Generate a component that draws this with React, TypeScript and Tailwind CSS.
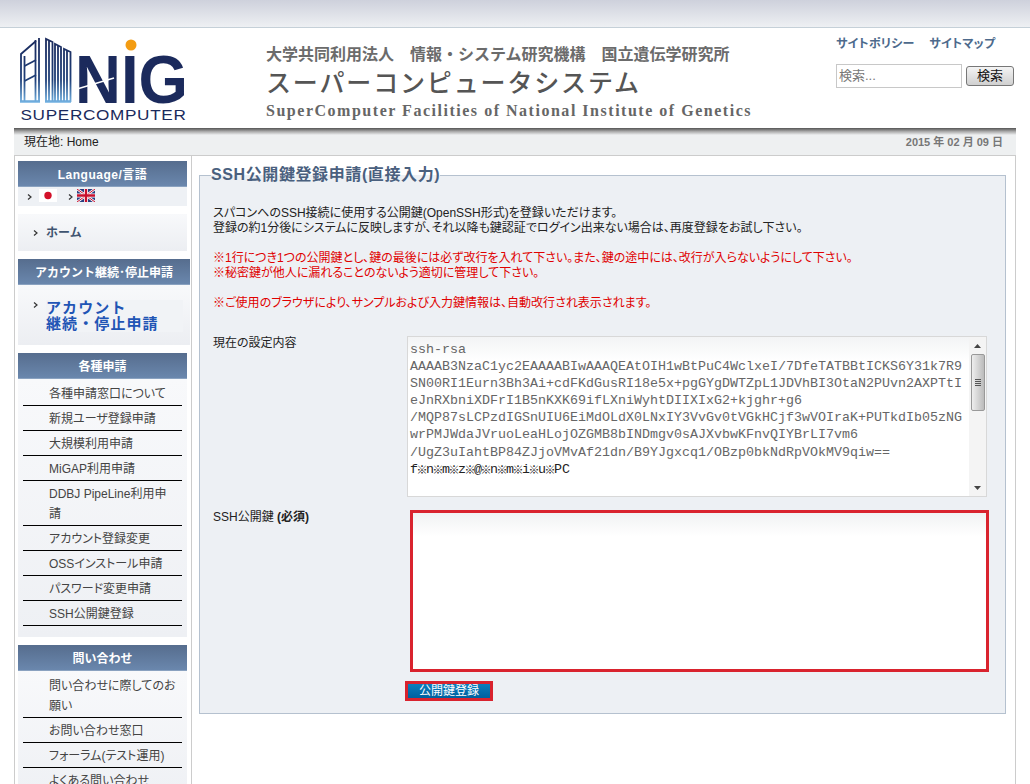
const S = '"Liberation Sans","Noto Sans CJK JP",sans-serif';

function Chev({ className = '' }: { className?: string }) {
  return (
    <svg width="5" height="6" viewBox="0 0 5 6" className={className}>
      <path d="M1 0.5 L4 3 L1 5.5" fill="none" stroke="#333" strokeWidth="1.2" />
    </svg>
  );
}

function Logo() {
  return (
    <svg width="170" height="90" viewBox="0 0 170 90" className="shrink-0 overflow-visible" style={{ fontFamily: S }}>
      <defs>
        <linearGradient id="bld" gradientUnits="userSpaceOnUse" x1="0" y1="2" x2="0" y2="68">
          <stop offset="0" stopColor="#1b2a5c" />
          <stop offset="0.65" stopColor="#1f3f78" />
          <stop offset="1" stopColor="#74b4e4" />
        </linearGradient>
      </defs>
      <g fill="none" stroke="url(#bld)" strokeWidth="1.8">
        <path d="M1 67 V19 L16 6" />
        <path d="M4.5 67 V21" />
        <path d="M4.5 31 L16 25" />
        <path d="M4.5 46 L16 40" />
        <path d="M15.5 67 V5" />
        <path d="M19 67 V3" />
        <path d="M26 67 V4 L32.5 7 V67" />
        <path d="M29 67 V6" />
        <path d="M35 67 V9 L41 12 V67" />
        <path d="M38 67 V11" />
        <path d="M44 67 V14 L50.5 17 V67" />
        <path d="M47 67 V16" />
        <path d="M0 66.5 H20 M25 66.5 H51" strokeWidth="2.4" />
      </g>
      <text x="55" y="68" fontSize="69" fontWeight="700" fill="#1b2a5c" textLength="113" lengthAdjust="spacingAndGlyphs">NIG</text>
      <path d="M57 54 L94 43" stroke="#fff" strokeWidth="1.4" />
      <circle cx="111" cy="10" r="5.5" fill="#f39c12" />
      <text x="0.5" y="85" fontSize="15.5" fill="#1b2a5c" letterSpacing="0.6" textLength="166" lengthAdjust="spacingAndGlyphs">SUPERCOMPUTER</text>
    </svg>
  );
}

function Header() {
  return (
    <div className="flex h-[100px] bg-white">
      <div className="pl-[6px] pt-[7px] w-[252px]">
        <Logo />
      </div>
      <div className="w-[570px] text-[#666] pt-[15px]">
        <div className="text-[16px] font-bold leading-[20px] text-[#6b6b6b]" style={{ fontFamily: '"Noto Sans CJK JP",sans-serif' }}>
          大学共同利用法人　情報・システム研究機構　国立遺伝学研究所
        </div>
        <div className="text-[25px] font-medium leading-[34px] mt-[1px] text-[#555] tracking-[1.85px]" style={{ fontFamily: '"Noto Sans CJK JP",sans-serif' }}>
          スーパーコンピュータシステム
        </div>
        <div className="text-[16px] font-bold leading-[20px] mt-[3px] tracking-[1.52px] text-[#666]" style={{ fontFamily: '"Liberation Serif",serif' }}>
          SuperComputer Facilities of National Institute of Genetics
        </div>
      </div>
      <div className="pt-[7px] flex-1">
        <div className="flex gap-[15px] text-[12px] font-bold text-[#4d6a8c] leading-[18px] tracking-[0.2px] [font-feature-settings:'palt'] whitespace-nowrap">
          <span>サイトポリシー</span>
          <span>サイトマップ</span>
        </div>
      </div>
    </div>
  );
}

function SideHead({ children, wide }: { children: React.ReactNode; wide?: boolean }) {
  return (
    <div className={`h-[26px] flex items-center justify-center pt-[2px] text-white font-bold text-[12px] bg-gradient-to-b from-[#566d8e] to-[#6a87ad] border-b border-[#8aa2c0] ${wide ? 'w-[172px]' : 'w-[169px]'}`}>
      {children}
    </div>
  );
}

function SideList({ items, end = 11 }: { items: string[]; end?: number }) {
  return (
    <div className="w-[169px] bg-gradient-to-b from-[#f8f9fb] to-[#eef0f4] pt-[2px] [font-feature-settings:'palt']" style={{ paddingBottom: end }}>
      {items.map((t) => (
        <div key={t} className="mx-[5px] pl-[26px] pr-[5px] pt-[3px] pb-[1px] border-b border-black text-[12px] leading-[20px] text-[#444]">
          {t}
        </div>
      ))}
    </div>
  );
}

function Sidebar() {
  return (
    <div className="w-[177px] shrink-0 border-r border-[#ccc] pl-[3px] pt-[5px]">
      <SideHead><span className="tracking-[0.5px]">Language/言語</span></SideHead>
      <div className="w-[169px] h-[19px] bg-[#eef1f5] flex items-start pl-[9px]">
        <Chev className="mt-[7px]" />
        <svg width="18" height="13" viewBox="0 0 18 13" className="ml-[7px] mt-[2px]">
          <rect width="18" height="13" fill="#fff" />
          <circle cx="9" cy="6.5" r="3.7" fill="#d3112a" />
        </svg>
        <Chev className="ml-[11px] mt-[7px]" />
        <svg width="18" height="13" viewBox="0 0 18 13" className="ml-[4px] mt-[2px]">
          <rect width="18" height="13" fill="#2a3f80" />
          <path d="M0 0 L18 13 M18 0 L0 13" stroke="#fff" strokeWidth="2.5" />
          <path d="M0 0 L18 13 M18 0 L0 13" stroke="#c8102e" strokeWidth="1" />
          <path d="M9 0 V13 M0 6.5 H18" stroke="#fff" strokeWidth="4" />
          <path d="M9 0 V13 M0 6.5 H18" stroke="#c8102e" strokeWidth="2.4" />
        </svg>
      </div>
      <div className="w-[169px] h-[37px] mt-[8px] bg-gradient-to-b from-[#f8f9fb] to-[#eceef2] flex items-center pl-[15px]">
        <Chev />
        <span className="ml-[8px] text-[12px] font-bold text-[#3f5470]">ホーム</span>
      </div>
      <div className="mt-[8px]">
        <SideHead wide>アカウント継続･停止申請</SideHead>
      </div>
      <div className="w-[172px] h-[60px] bg-gradient-to-b from-[#f8f9fb] to-[#eceef2] pt-[15px] pl-[15px] pr-[7px]">
        <div className="flex items-start">
          <Chev className="mt-[2px]" />
          <div className="ml-[8px] flex-1 bg-[#f1f3f6] text-[15px] font-bold leading-[16px] tracking-[1.1px] text-[#1f55b5]">
            アカウント<br />継続・停止申請
          </div>
        </div>
      </div>
      <div className="mt-[8px]">
        <SideHead>各種申請</SideHead>
      </div>
      <SideList
        items={[
          '各種申請窓口について',
          '新規ユーザ登録申請',
          '大規模利用申請',
          'MiGAP利用申請',
          'DDBJ PipeLine利用申請',
          'アカウント登録変更',
          'OSSインストール申請',
          'パスワード変更申請',
          'SSH公開鍵登録',
        ]}
      />
      <div className="mt-[8px]">
        <SideHead>問い合わせ</SideHead>
      </div>
      <SideList items={['問い合わせに際してのお願い', 'お問い合わせ窓口', 'フォーラム(テスト運用)', 'よくある問い合わせ']} />
    </div>
  );
}

const KEY = [
  'ssh-rsa',
  'AAAAB3NzaC1yc2EAAAABIwAAAQEAtOIH1wBtPuC4WclxeI/7DfeTATBBtICKS6Y31k7R9',
  'SN00RI1Eurn3Bh3Ai+cdFKdGusRI18e5x+pgGYgDWTZpL1JDVhBI3OtaN2PUvn2AXPTtI',
  'eJnRXbniXDFrI1B5nKXK69ifLXniWyhtDIIXIxG2+kjghr+g6',
  '/MQP87sLCPzdIGSnUIU6EiMdOLdX0LNxIY3VvGv0tVGkHCjf3wVOIraK+PUTkdIb05zNG',
  'wrPMJWdaJVruoLeaHLojOZGMB8bINDmgv0sAJXvbwKFnvQIYBrLI7vm6',
  '/UgZ3uIahtBP84ZJjoVMvAf21dn/B9YJgxcq1/OBzp0bkNdRpVOkMV9qiw==',
];

const MASKED = 'f※n※m※z※@※n※m※i※u※PC';

function Scrollbar() {
  return (
    <div className="w-[17px] shrink-0 flex flex-col items-center bg-[#f4f4f4]">
      <div className="h-[17px] flex items-center justify-center">
        <svg width="7" height="4"><path d="M3.5 0 L7 4 H0 Z" fill="#444" /></svg>
      </div>
      <div className="w-[14px] h-[57px] border border-[#999] rounded-[2px] bg-gradient-to-r from-[#eee] to-[#bbb] flex flex-col items-center justify-center gap-[1px]">
        <div className="w-[6px] h-[1px] bg-[#555]" />
        <div className="w-[6px] h-[1px] bg-[#555]" />
        <div className="w-[6px] h-[1px] bg-[#555]" />
        <div className="w-[6px] h-[1px] bg-[#555]" />
      </div>
      <div className="flex-1" />
      <div className="h-[17px] flex items-center justify-center">
        <svg width="7" height="4"><path d="M0 0 H7 L3.5 4 Z" fill="#444" /></svg>
      </div>
    </div>
  );
}

function Main() {
  return (
    <div className="flex-1 pl-[7px] pr-[9px] pt-[9px] bg-white [font-feature-settings:'palt']">
      <fieldset className="border border-[#b5c1cf] bg-[#edf0f4] h-[549px] pl-[13px] pr-[16px] m-0 min-w-0">
        <legend className="ml-[-2px] px-0 text-[16px] leading-[20px] font-bold text-[#4a607e] tracking-[0.6px]">SSH公開鍵登録申請(直接入力)</legend>
        <div className="text-[12px] leading-[15px] text-[#222] mt-[21px]">
          スパコンへのSSH接続に使用する公開鍵(OpenSSH形式)を登録いただけます。<br />
          登録の約1分後にシステムに反映しますが、それ以降も鍵認証でログイン出来ない場合は、再度登録をお試し下さい。
        </div>
        <div className="text-[12px] leading-[15px] text-[#e00000] mt-[15px]">
          ※1行につき1つの公開鍵とし、鍵の最後には必ず改行を入れて下さい。また、鍵の途中には、改行が入らないようにして下さい。<br />
          ※秘密鍵が他人に漏れることのないよう適切に管理して下さい。
        </div>
        <div className="text-[12px] leading-[15px] text-[#e00000] mt-[15px]">
          ※ご使用のブラウザにより、サンプルおよび入力鍵情報は、自動改行され表示されます。
        </div>
        <div className="flex mt-[25px]">
          <div className="w-[194px] text-[12px] leading-[15px] text-[#222]">現在の設定内容</div>
          <div className="w-[580px] h-[161px] border border-[#d8d8d8] bg-gradient-to-b from-[#f3f4f5] via-white via-15% to-white flex">
            <div className="flex-1 pl-[2px] pt-[4px] text-[13.33px] leading-[17.1px] text-[#666] whitespace-pre overflow-hidden [font-feature-settings:normal]" style={{ fontFamily: '"Liberation Mono",monospace' }}>
              {KEY.map((l) => (
                <div key={l}>{l}</div>
              ))}
              <div className="flex text-[#222]">
                {MASKED.split('').map((c, i) => (
                  <span key={i} className={`w-[8px] flex justify-center ${c === '※' ? 'text-[11px]' : ''}`} style={c === '※' ? { fontFamily: '"Noto Sans CJK JP",sans-serif' } : undefined}>
                    {c}
                  </span>
                ))}
              </div>
            </div>
            <Scrollbar />
          </div>
        </div>
        <div className="flex mt-[13px]">
          <div className="w-[197px] text-[12px] leading-[15px] text-[#222]">
            SSH公開鍵 <b>(必須)</b>
          </div>
          <div className="w-[579px] h-[162px] border-[3px] border-[#d9232e] bg-gradient-to-b from-[#f1f2f3] via-white via-15% to-white" />
        </div>
        <div className="ml-[192px] mt-[9px] w-[88px] h-[20px] border-[3px] border-[#d9232e] bg-gradient-to-b from-[#0b7fbd] to-[#00609f] text-white text-[12px] leading-[14px] text-center">
          公開鍵登録
        </div>
      </fieldset>
    </div>
  );
}

export default function App() {
  return (
    <div className="h-[784px] overflow-hidden bg-white relative" style={{ fontFamily: S }}>
      <div className="h-[28px] bg-gradient-to-b from-[#ced1dc] to-[#eef0f3] border-b border-[#c5d0d8]" />
      <div className="mx-[14px]">
        <Header />
        <div className="h-[28px] bg-[#eef0f1] border-b border-[#ccc] relative">
          <div className="h-[7px] bg-gradient-to-b from-[#555] via-[#aaa] to-[#eef0f1]" />
          <div className="flex justify-between pl-[10px] pr-[13px] text-[12px] leading-[14px]">
            <span className="text-[#222]">現在地: Home</span>
            <span className="text-[#777] text-[11px] font-bold">2015 年 02 月 09 日</span>
          </div>
        </div>
        <div className="flex border-x border-[#ccc] h-[640px] overflow-hidden">
          <Sidebar />
          <Main />
        </div>
      </div>
      <div className="absolute left-[836px] top-[64px] w-[126px] h-[24px] border border-[#c8c8c8] bg-white text-[13px] leading-[22px] pl-[2px] text-[#777]">検索...</div>
      <div className="absolute left-[966px] top-[66px] w-[48px] h-[20px] border border-[#777] rounded-[3px] bg-gradient-to-b from-[#f4f4f4] to-[#d0d0d0] text-[13px] leading-[18px] text-center text-[#111]">検索</div>
    </div>
  );
}
